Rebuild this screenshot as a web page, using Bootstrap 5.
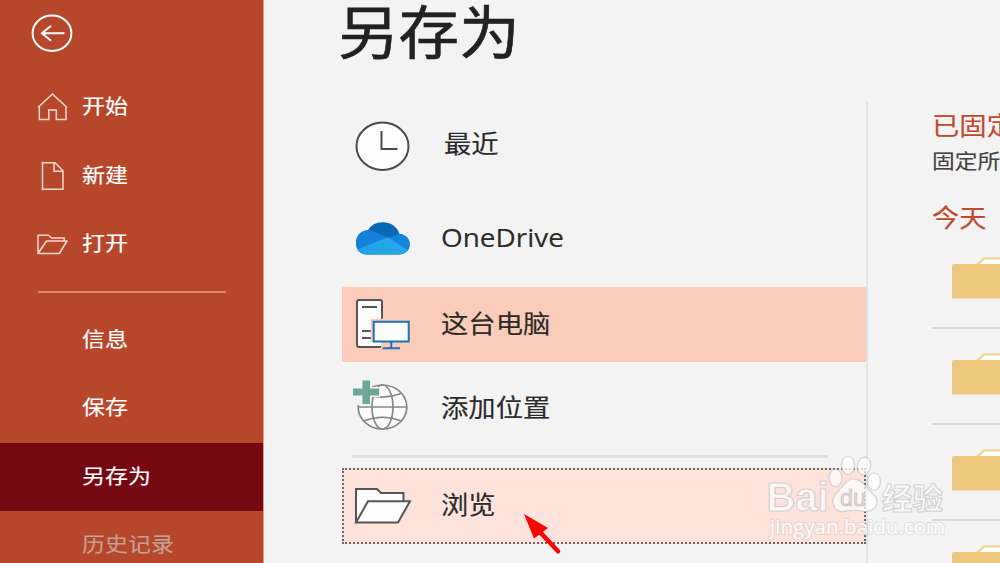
<!DOCTYPE html>
<html lang="zh-CN">
<head>
    <meta charset="UTF-8">
    <meta name="viewport" content="width=device-width, initial-scale=1.0">
    <title>另存为</title>
    <link rel="stylesheet" href="https://cdn.jsdelivr.net/npm/bootstrap@5.3.0/dist/css/bootstrap.min.css">
    <style>
        body { background-color: #f3f3f3; color: #2b2b2b; font-family: "Open Sans", "Noto Sans CJK SC", sans-serif; }
        svg { display: block; flex-shrink: 0; }
        .wide { display: inline-block; transform: scaleX(1.115); transform-origin: left center; white-space: nowrap; line-height: 1; padding-bottom: 1px; -webkit-text-stroke: .15px currentColor; }

        /* Sidebar */
        .side-pane { width: 264px; background-color: #b7472a; padding-top: 14px; border-right: 1px solid #d99c8b; }
        .back-btn { margin: 0 0 20px 31px; height: 39px; }
        .side-pane .nav-link { height: 68.5px; padding: 0; color: #fff; font-size: 20.6px; }
        .side-pane .nav-link.active { background-color: #740912; }
        .side-pane .nav-link.disabled { color: #c3a096; }
        .side-icon { width: 82px; padding-left: 36px; }
        .side-line { height: 2px; background-color: #dc8a74; margin: 12px 37px 13px 38px; }

        /* Places */
        .places-pane { width: 604px; }
        .page-title { font-size: 58px; height: 102px; padding: 0 0 0 74px; margin: 0; font-weight: 400; color: #222; }
        .page-title .wide { transform: translateY(-3px) scaleX(1.045); -webkit-text-stroke-width: .6px; }
        .places { margin-left: 78px; height: 461px; border-right: 2px solid #e2e2e2; }
        .place { font-size: 24.5px; color: #2b2b2b; }
        .place-icon { width: 99px; padding-left: 12px; }
        .place-recent { height: 88px; }
        .place-recent .place-icon { width: 102px; }
        .place-recent .wide { padding-bottom: 4px; }
        .place-cloud { height: 97px; }
        .place-cloud .wide { font-size: 25.8px; transform: scaleX(1.082); padding-bottom: 2px; }
        .place-pc { height: 75px; background-color: #fbcdb8; }
        .place-add { height: 93px; }
        .place-browse { height: 76px; background-color: #fde3dc; border: 2px dotted #666; }
        .place-browse .place-icon { width: 97px; padding-left: 10px; }
        .place-line { height: 3px; background-color: #dfdfdf; margin: 0 38px 10px 10px; }

        /* Recent folders */
        .recent-pane { width: 132px; padding: 108px 0 0 64px; }
        .recent-title { font-size: 24.5px; color: #be4b30; height: 28px; }
        .recent-note { font-size: 20.4px; color: #444; height: 64px; padding-top: 10px; }
        .folder-row { height: 96px; border-bottom: 2px solid #d8d8d8; padding: 24px 0 0 20px; }
        .folder-row:first-child { height: 101px; padding-top: 29px; }

        .cursor-arrow { position: absolute; left: 520px; top: 510px; }
        .watermark { position: absolute; left: 760px; top: 450px; }
    </style>
</head>
<body class="overflow-hidden vh-100">

    <div class="d-flex vh-100 overflow-hidden position-relative">

        <!-- Sidebar -->
        <nav class="side-pane flex-shrink-0">
            <div class="back-btn">
                <svg width="42" height="39" viewBox="0 0 42 39" fill="none" stroke="#fff" stroke-width="2">
                    <ellipse cx="21" cy="19.3" rx="19.4" ry="17.7"/>
                    <path d="M33.5 19.2H11M20 11.8 11 19.2 20 26.7"/>
                </svg>
            </div>
            <div class="nav flex-column flex-nowrap">
                <a class="nav-link d-flex align-items-center" href="#">
                    <span class="side-icon">
                        <svg width="34" height="30" viewBox="0 0 34 30" fill="none" stroke="#f5d9d1" stroke-width="1.5">
                            <path d="M2 15.5 16.5 2 31 15.5M3.3 14.5V27.5H12.8V18H20.3V27.5H30V14.5"/>
                        </svg>
                    </span>
                    <span class="wide">开始</span>
                </a>
                <a class="nav-link d-flex align-items-center" href="#">
                    <span class="side-icon">
                        <svg width="34" height="30" viewBox="0 0 34 30" fill="none" stroke="#f5d9d1" stroke-width="1.5">
                            <path d="M6.5 1.7H19L27 9.8V28.3H6.5ZM18 1.7V10.3H27"/>
                        </svg>
                    </span>
                    <span class="wide">新建</span>
                </a>
                <a class="nav-link d-flex align-items-center" href="#">
                    <span class="side-icon">
                        <svg width="34" height="30" viewBox="0 0 34 30" fill="none" stroke="#f5d9d1" stroke-width="1.5" stroke-linejoin="round">
                            <path d="M2 24.5V6.2H12.5L15.5 9H28.3V12M2 24.5 10.5 12H31L23.3 24.5Z"/>
                        </svg>
                    </span>
                    <span class="wide">打开</span>
                </a>
                <div class="side-line"></div>
                <a class="nav-link d-flex align-items-center" href="#"><span class="side-icon"></span><span class="wide">信息</span></a>
                <a class="nav-link d-flex align-items-center" href="#"><span class="side-icon"></span><span class="wide">保存</span></a>
                <a class="nav-link active d-flex align-items-center" href="#"><span class="side-icon"></span><span class="wide">另存为</span></a>
                <a class="nav-link disabled d-flex align-items-center" href="#"><span class="side-icon"></span><span class="wide">历史记录</span></a>
            </div>
        </nav>

        <!-- Places -->
        <main class="places-pane flex-shrink-0">
            <h1 class="page-title"><span class="wide">另存为</span></h1>
            <div class="places">
                <div class="place place-recent d-flex align-items-center">
                    <span class="place-icon">
                        <svg width="58" height="52" viewBox="0 0 58 52" stroke="#4a4a4a">
                            <ellipse cx="28.5" cy="26.2" rx="26" ry="23.7" fill="#fcfcfc" stroke-width="2"/>
                            <path d="M27.5 11V29H43.5" fill="none" stroke-width="2"/>
                        </svg>
                    </span>
                    <span class="wide">最近</span>
                </div>
                <div class="place place-cloud d-flex align-items-center">
                    <span class="place-icon">
                        <svg width="58" height="35" viewBox="0 0 58 35">
                            <defs>
                                <clipPath id="cloud">
                                    <path d="M13 33.5C6 33.5 2 28.5 2 22 2 15 7 9.5 14 9.3 17 4 22 1.3 28.5 1.3 37 1.3 43.5 6 45.5 13 51.5 13.5 55.7 17.5 55.7 23 55.7 29 51.5 33.5 45 33.5Z"/>
                                </clipPath>
                                <linearGradient id="cloudFront" x1="0" y1="1" x2="1" y2="0">
                                    <stop offset="0" stop-color="#1f9fe5"/>
                                    <stop offset="1" stop-color="#2aabee"/>
                                </linearGradient>
                            </defs>
                            <g clip-path="url(#cloud)">
                                <path fill="#0868b8" d="M0 0H58V36H0Z"/>
                                <path fill="#1580d9" d="M0 8C10 7 16 9 21 11L36 17.5 5 36H0Z"/>
                                <path fill="#1384dc" d="M34 17 45 13 58 10V36Z"/>
                                <path fill="url(#cloudFront)" d="M4 28 34 16.5 54 29 50 36H6Z"/>
                            </g>
                        </svg>
                    </span>
                    <span class="wide">OneDrive</span>
                </div>
                <div class="place place-pc d-flex align-items-center">
                    <span class="place-icon">
                        <svg width="58" height="54" viewBox="0 0 58 54" fill="none" stroke-width="2">
                            <path fill="#fcfcfc" d="M4 3H27V48H4Z"/>
                            <path stroke="#555" d="M27 49H5Q3 49 3 47V4Q3 2 5 2H26Q28 2 28 4V24"/>
                            <path stroke="#555" d="M8 9H23M8 33H17M8 40H17"/>
                            <path stroke="#fbcdb8" stroke-width="3" d="M18.2 44V22.2H29"/>
                            <path fill="#fcfcfc" stroke="#1e70bb" d="M19.7 23.7H54.7V43.5H19.7Z"/>
                            <path stroke="#1e70bb" d="M37.3 44V50M28.5 50.2H46"/>
                        </svg>
                    </span>
                    <span class="wide">这台电脑</span>
                </div>
                <div class="place place-add d-flex align-items-center">
                    <span class="place-icon">
                        <svg width="58" height="62" viewBox="0 0 58 62" fill="none" stroke="#888" stroke-width="1.7" overflow="visible">
                            <ellipse cx="28.5" cy="29" rx="24.3" ry="22" fill="#fcfcfc"/>
                            <ellipse cx="28.5" cy="29" rx="10.5" ry="22"/>
                            <path d="M4 29H53M10 16Q28.5 22.5 47 15.5M9.5 43Q28.5 35.5 47.5 43"/>
                            <path fill="#f3f3f3" stroke="none" d="M-2 0H18V9H26V19H17V27H-2Z"/>
                            <path fill="#70a697" stroke="none" d="M8.5 2.5H16V10.5H25V17.5H16V26H8.5V17.5H-1V10.5H8.5Z"/>
                        </svg>
                    </span>
                    <span class="wide">添加位置</span>
                </div>
                <div class="place-line"></div>
                <div class="place place-browse d-flex align-items-center">
                    <span class="place-icon">
                        <svg width="58" height="38" viewBox="0 0 58 38" fill="#fcfcfc" stroke="#555" stroke-width="2">
                            <path d="M2 35.5V2H23L27 6H49.5V14.5"/>
                            <path d="M2 35.5 14 14.3H56L44 35.5Z"/>
                        </svg>
                    </span>
                    <span class="wide">浏览</span>
                </div>
            </div>
        </main>

        <!-- Recent folders -->
        <aside class="recent-pane flex-shrink-0 overflow-hidden">
            <div class="recent-title"><span class="wide">已固定</span></div>
            <div class="recent-note"><span class="wide">固定所</span></div>
            <div class="recent-title"><span class="wide">今天</span></div>
            <div id="folderList"></div>
        </aside>

        <!-- Pointer -->
        <svg class="cursor-arrow" width="44" height="46" viewBox="0 0 44 46">
            <path d="M18 20 38 41.3" stroke="#f00" stroke-width="4.5" stroke-linecap="round"/>
            <path d="M4 4 28 18 14 28.5Z" fill="#f00"/>
        </svg>

        <!-- Watermark -->
        <svg class="watermark" width="200" height="100" viewBox="0 0 200 100" fill="#fff" fill-opacity=".72" stroke="#bbb" stroke-opacity=".6" stroke-width="1.2">
            <text x="6.5" y="60.5" font-family="Liberation Sans" font-weight="700" font-size="40" textLength="62" lengthAdjust="spacingAndGlyphs">Bai</text>
            <ellipse cx="75.5" cy="28" rx="6.5" ry="8.5"/>
            <ellipse cx="88" cy="15.5" rx="6.5" ry="9"/>
            <ellipse cx="104" cy="16" rx="6.5" ry="9" transform="rotate(10 104 16)"/>
            <ellipse cx="114" cy="31.5" rx="6.5" ry="8.5"/>
            <path d="M94 29C101 29 104 35 110 41 116 47 119 50 116 56 113 62 106 62 102 61 96 60 91 60 86 61 80 63 74 60 73 53 72 47 77 43 81 38 85 33 88 29 94 29Z"/>
            <text x="80" y="56" font-family="Liberation Sans" font-size="24" fill="#e9d3cd" textLength="26" lengthAdjust="spacingAndGlyphs">du</text>
            <text x="122" y="59" font-family="Noto Sans CJK SC" font-weight="700" font-size="30" textLength="61" lengthAdjust="spacingAndGlyphs">经验</text>
            <text x="10" y="84" font-family="Open Sans" font-size="20" stroke-opacity=".3" stroke-width="2.4" paint-order="stroke" fill-opacity=".95" textLength="175" lengthAdjust="spacingAndGlyphs">jingyan.baidu.com</text>
        </svg>
    </div>

    <script src="https://cdn.jsdelivr.net/npm/bootstrap@5.3.0/dist/js/bootstrap.bundle.min.js"></script>
    <script>
        // Folder rows in the recent list
        const folderList = document.getElementById("folderList");

        for (let i = 0; i < 4; i++) {
            folderList.innerHTML += `
                <div class="folder-row">
                    <svg width="60" height="43" viewBox="0 0 60 43">
                        <path d="M25 8 32 1.5H60V8Z" fill="#fff" stroke="#efd08c" stroke-width="2"/>
                        <path d="M0 9Q0 7 2 7H60V41.5H0Z" fill="#edc77d"/>
                    </svg>
                </div>
            `;
        }
    </script>

</body>
</html>
